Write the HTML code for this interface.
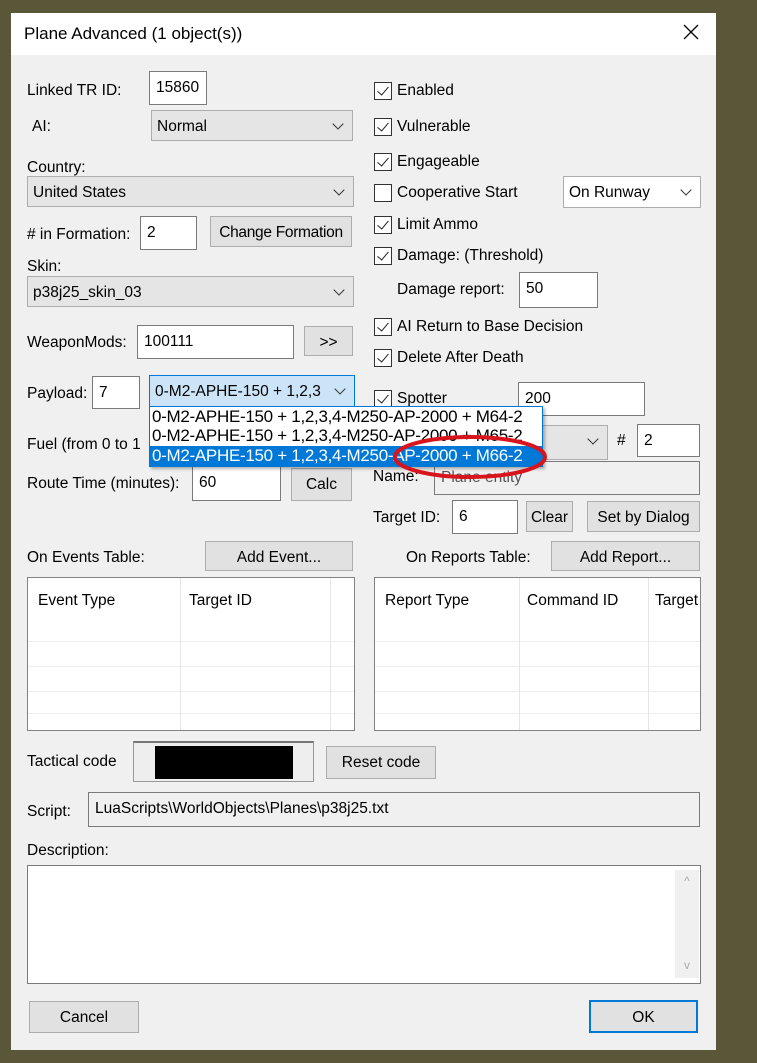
<!DOCTYPE html>
<html><head><style>
body{margin:0;width:757px;height:1063px;background:#5a5638;position:relative;overflow:hidden;font-family:"Liberation Sans",sans-serif;font-size:15.5px;color:#000}
.a{position:absolute;white-space:nowrap;margin-top:2px}
.dlg{position:absolute;left:11px;top:13px;width:705px;height:1037px;background:#f0f0f0}
.tb{position:absolute;left:11px;top:13px;width:705px;height:42px;background:#fff}
.in{position:absolute;background:#fff;border:1px solid #7a7a7a;box-sizing:border-box;padding:7px 0 0 6px;white-space:nowrap;overflow:hidden}
.cb{position:absolute;background:#e5e5e5;border:1px solid #adadad;box-sizing:border-box;padding:7px 0 0 5px;white-space:nowrap;overflow:hidden}
.cb:after{content:"";position:absolute;right:10px;top:9px;width:7px;height:7px;border-right:1.3px solid #333;border-bottom:1.3px solid #333;transform:rotate(45deg)}
.bt{position:absolute;background:#e1e1e1;border:1px solid #adadad;box-sizing:border-box;text-align:center;padding-top:7px;white-space:nowrap}
.ck{position:absolute;width:18px;height:18px;border:1px solid #333;box-sizing:border-box;background:#fff;margin-top:2px}
.ck.on:after{content:"";position:absolute;left:5px;top:1px;width:5px;height:10px;border-right:1.6px solid #222;border-bottom:1.6px solid #222;transform:rotate(40deg)}
.tbl{position:absolute;background:#fff;border:1px solid #828282;box-sizing:border-box}
.vl{position:absolute;top:0;bottom:0;width:1px;background:#e6e6e6}
.hl{position:absolute;left:0;right:0;height:1px;background:#eee}
.dd{position:absolute;left:2px;white-space:nowrap;font-size:17px;letter-spacing:-0.3px}
</style></head><body>
<div class="dlg"></div>
<div class="tb"></div>
<div class="a" style="left:24px;top:22px;font-size:17px">Plane Advanced (1 object(s))</div>
<svg style="position:absolute;left:683px;top:24px" width="16" height="16"><path d="M1 1L15 15M15 1L1 15" stroke="#000" stroke-width="1.3"/></svg>

<div class="a" style="left:27px;top:80px">Linked TR ID:</div>
<div class="in" style="left:149px;top:71px;width:58px;height:34px">15860</div>
<div class="a" style="left:32px;top:116px">AI:</div>
<div class="cb" style="left:151px;top:110px;width:202px;height:31px">Normal</div>
<div class="a" style="left:27px;top:157px">Country:</div>
<div class="cb" style="left:27px;top:176px;width:327px;height:31px">United States</div>
<div class="a" style="left:27px;top:224px"># in Formation:</div>
<div class="in" style="left:140px;top:216px;width:57px;height:34px">2</div>
<div class="bt" style="left:210px;top:216px;width:142px;height:31px;letter-spacing:-0.3px">Change Formation</div>
<div class="a" style="left:27px;top:256px">Skin:</div>
<div class="cb" style="left:27px;top:276px;width:327px;height:31px">p38j25_skin_03</div>
<div class="a" style="left:27px;top:332px">WeaponMods:</div>
<div class="in" style="left:137px;top:325px;width:157px;height:34px">100111</div>
<div class="bt" style="left:304px;top:326px;width:49px;height:30px">&gt;&gt;</div>
<div class="a" style="left:27px;top:383px">Payload:</div>
<div class="in" style="left:92px;top:376px;width:48px;height:33px">7</div>
<div class="cb" style="left:149px;top:375px;width:206px;height:32px;background:#cce4f7;border-color:#0078d7;padding-right:30px">0-M2-APHE-150 + 1,2,3</div>
<div class="a" style="left:27px;top:434px">Fuel (from 0 to 1</div>
<div class="a" style="left:27px;top:473px">Route Time (minutes):</div>
<div class="in" style="left:192px;top:466px;width:89px;height:35px">60</div>
<div class="bt" style="left:291px;top:468px;width:61px;height:33px">Calc</div>

<div class="ck on" style="left:374px;top:80px"></div><div class="a" style="left:397px;top:80px">Enabled</div>
<div class="ck on" style="left:374px;top:116px"></div><div class="a" style="left:397px;top:116px">Vulnerable</div>
<div class="ck on" style="left:374px;top:151px"></div><div class="a" style="left:397px;top:151px">Engageable</div>
<div class="ck" style="left:374px;top:182px"></div><div class="a" style="left:397px;top:182px">Cooperative Start</div>
<div class="cb" style="left:563px;top:176px;width:138px;height:32px;background:#fff">On Runway</div>
<div class="ck on" style="left:374px;top:214px"></div><div class="a" style="left:397px;top:214px">Limit Ammo</div>
<div class="ck on" style="left:374px;top:245px"></div><div class="a" style="left:397px;top:245px">Damage: (Threshold)</div>
<div class="a" style="left:397px;top:279px">Damage report:</div>
<div class="in" style="left:519px;top:272px;width:79px;height:36px">50</div>
<div class="ck on" style="left:374px;top:316px"></div><div class="a" style="left:397px;top:316px">AI Return to Base Decision</div>
<div class="ck on" style="left:374px;top:347px"></div><div class="a" style="left:397px;top:347px">Delete After Death</div>
<div class="ck on" style="left:374px;top:388px"></div><div class="a" style="left:397px;top:388px">Spotter</div>
<div class="in" style="left:518px;top:382px;width:127px;height:34px">200</div>
<div class="cb" style="left:530px;top:425px;width:78px;height:35px"></div>
<div class="a" style="left:617px;top:430px">#</div>
<div class="in" style="left:637px;top:424px;width:63px;height:33px">2</div>
<div class="a" style="left:373px;top:466px">Name:</div>
<div class="in" style="left:434px;top:461px;width:266px;height:34px;background:#f0f0f0;color:#555">Plane entity</div>
<div class="a" style="left:373px;top:507px">Target ID:</div>
<div class="in" style="left:452px;top:500px;width:66px;height:34px">6</div>
<div class="bt" style="left:526px;top:501px;width:47px;height:31px">Clear</div>
<div class="bt" style="left:587px;top:501px;width:113px;height:31px">Set by Dialog</div>

<div style="position:absolute;left:149px;top:406px;width:394px;height:61px;background:#fff;border:1px solid #0078d7;box-sizing:border-box;box-shadow:2px 2px 3px rgba(0,0,0,.3)">
<div class="dd" style="top:0">0-M2-APHE-150 + 1,2,3,4-M250-AP-2000 + M64-2</div>
<div class="dd" style="top:19px">0-M2-APHE-150 + 1,2,3,4-M250-AP-2000 + M65-2</div>
<div class="dd" style="left:0;top:39px;width:392px;height:20px;line-height:20px;background:#0078d7;color:#fff;padding-left:2px;box-sizing:border-box">0-M2-APHE-150 + 1,2,3,4-M250-AP-2000 + M66-2</div>
</div>
<svg style="position:absolute;left:0;top:0" width="757" height="1063"><ellipse cx="470" cy="457" rx="75" ry="20" fill="none" stroke="#d8141c" stroke-width="4"/></svg>

<div class="a" style="left:27px;top:547px">On Events Table:</div>
<div class="bt" style="left:205px;top:541px;width:148px;height:30px">Add Event...</div>
<div class="a" style="left:406px;top:547px">On Reports Table:</div>
<div class="bt" style="left:551px;top:541px;width:149px;height:30px">Add Report...</div>
<div class="tbl" style="left:27px;top:577px;width:328px;height:154px">
<div class="vl" style="left:152px"></div><div class="vl" style="left:302px"></div>
<div class="hl" style="top:63px"></div><div class="hl" style="top:88px"></div><div class="hl" style="top:113px"></div><div class="hl" style="top:135px"></div>
<div class="a" style="left:10px;top:12px">Event Type</div><div class="a" style="left:161px;top:12px">Target ID</div></div>
<div class="tbl" style="left:374px;top:577px;width:327px;height:154px">
<div class="vl" style="left:144px"></div><div class="vl" style="left:273px"></div>
<div class="hl" style="top:63px"></div><div class="hl" style="top:88px"></div><div class="hl" style="top:113px"></div><div class="hl" style="top:135px"></div>
<div class="a" style="left:10px;top:12px">Report Type</div><div class="a" style="left:152px;top:12px">Command ID</div><div class="a" style="left:280px;top:12px;width:44px;overflow:hidden">Target</div></div>

<div class="a" style="left:27px;top:751px">Tactical code</div>
<div style="position:absolute;left:133px;top:741px;width:181px;height:41px;border:1px solid #999;border-top:2px solid #777;box-sizing:border-box;background:#eee"><div style="position:absolute;left:21px;top:3px;width:138px;height:33px;background:#000"></div></div>
<div class="bt" style="left:326px;top:746px;width:110px;height:33px">Reset code</div>
<div class="a" style="left:27px;top:801px">Script:</div>
<div class="in" style="left:88px;top:792px;width:612px;height:35px;background:#f0f0f0">LuaScripts\WorldObjects\Planes\p38j25.txt</div>
<div class="a" style="left:27px;top:840px">Description:</div>
<div class="in" style="left:27px;top:865px;width:674px;height:119px"><div style="position:absolute;right:1px;top:4px;width:24px;height:108px;background:#f0f0f0;color:#aaa;font-size:12px;text-align:center"><div style="margin-top:4px">^</div><div style="margin-top:70px">v</div></div></div>
<div class="bt" style="left:29px;top:1001px;width:110px;height:32px">Cancel</div>
<div class="bt" style="left:589px;top:1000px;width:109px;height:33px;border:2px solid #0078d7">OK</div>
</body></html>
